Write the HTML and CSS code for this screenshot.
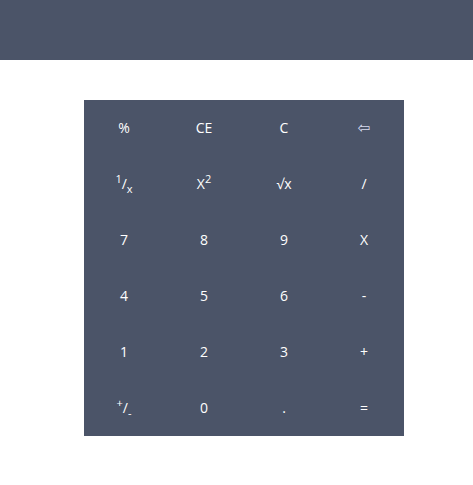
FILE: index.html
```html
<!DOCTYPE html>
<html>
<head>
<meta charset="utf-8">
<link rel="stylesheet" href="styles.css">
</head>
<body>
<header class="topbar"></header>
<main class="calc">
  <button class="key"><span>%</span></button>
  <button class="key"><span>CE</span></button>
  <button class="key"><span>C</span></button>
  <button class="key arrow"><span>&#8678;</span></button>
  <button class="key"><span><sup>1</sup>/<sub>x</sub></span></button>
  <button class="key"><span>X<sup>2</sup></span></button>
  <button class="key"><span>&radic;x</span></button>
  <button class="key"><span>/</span></button>
  <button class="key"><span>7</span></button>
  <button class="key"><span>8</span></button>
  <button class="key"><span>9</span></button>
  <button class="key"><span>X</span></button>
  <button class="key"><span>4</span></button>
  <button class="key"><span>5</span></button>
  <button class="key"><span>6</span></button>
  <button class="key"><span>-</span></button>
  <button class="key"><span>1</span></button>
  <button class="key"><span>2</span></button>
  <button class="key"><span>3</span></button>
  <button class="key"><span>+</span></button>
  <button class="key"><span><sup>+</sup>/<sub>-</sub></span></button>
  <button class="key"><span>0</span></button>
  <button class="key"><span>.</span></button>
  <button class="key"><span>=</span></button>
</main>
</body>
</html>
```
FILE: styles.css
```css
html, body {
  margin: 0;
  padding: 0;
  background: #ffffff;
  font-family: "Open Sans", "Noto Sans", sans-serif;
}
.topbar {
  height: 60px;
  background: #4b5468;
}
.calc {
  margin: 40px 0 0 84px;
  width: 320px;
  display: grid;
  grid-template-columns: repeat(4, 80px);
  grid-auto-rows: 56px;
  background: #4b5468;
}
.key {
  border: none;
  background: transparent;
  color: #ffffff;
  font-family: "Open Sans", "Noto Sans", sans-serif;
  font-size: 14px;
  padding: 0;
  margin: 0;
  display: flex;
  align-items: center;
  justify-content: center;
  line-height: 20px;
}
.key sup, .key sub {
  font-size: 11px;
  line-height: 0;
}
.arrow {
  font-family: "DejaVu Sans", sans-serif;
  font-size: 15px;
  color: #d8dcf0;
}
```
